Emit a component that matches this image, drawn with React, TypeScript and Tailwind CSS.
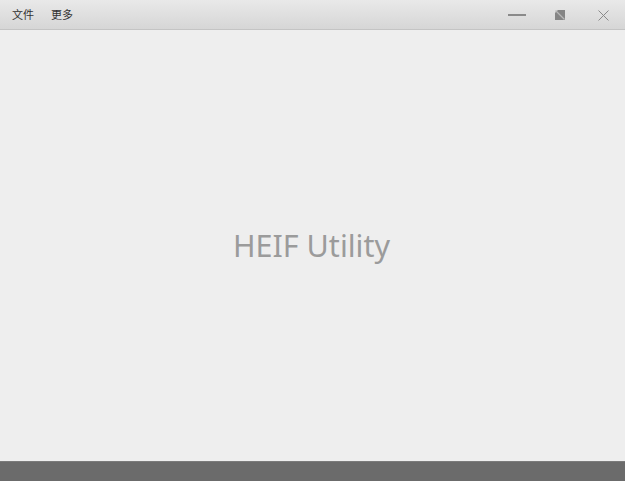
import React from "react";

function RestoreIcon() {
  return (
    <svg width="10" height="10" viewBox="0 0 10 10">
      <rect x="0" y="0" width="10" height="10" fill="#858585" />
      <path d="M0 0 L3 0 L0 3 Z" fill="#d0d0d0" />
      <path d="M1 1 L9.5 9.5" stroke="#b8b8b8" strokeWidth="1.2" />
    </svg>
  );
}

export default function App() {
  const menus = ["文件", "更多"];

  return (
    <div className="flex h-[481px] w-[625px] flex-col bg-[#eeeeee] font-['Noto_Sans','Noto_Sans_CJK_SC',sans-serif]">
      <div className="flex h-[30px] shrink-0 items-center border-b border-[#c4c4c4] bg-gradient-to-b from-[#e9e9e9] to-[#d6d6d6]">
        <div className="flex items-center gap-[17px] pl-[12px] pt-[2px] text-[11px] text-[#333333]">
          {menus.map((m) => (
            <span key={m}>{m}</span>
          ))}
        </div>
        <div className="ml-auto flex items-center pt-[1px]">
          <div className="flex w-[42px] justify-center">
            <div className="h-[2px] w-[18px] bg-[#8a8a8a]" />
          </div>
          <div className="flex w-[44px] justify-center">
            <RestoreIcon />
          </div>
          <div className="flex w-[43px] justify-center">
            <svg width="11" height="11" viewBox="0 0 11 11">
              <path d="M0.5 0.5 L10.5 10.5 M10.5 0.5 L0.5 10.5" stroke="#8a8a8a" strokeWidth="1" />
            </svg>
          </div>
        </div>
      </div>

      <div className="flex flex-1 items-center justify-center pr-[2px]">
        <span className="text-[30.5px] text-[#9b9b9b]">HEIF Utility</span>
      </div>

      <div className="h-[20px] shrink-0 border-t border-[#7b7b7b] bg-[#6b6b6b]" />
    </div>
  );
}
